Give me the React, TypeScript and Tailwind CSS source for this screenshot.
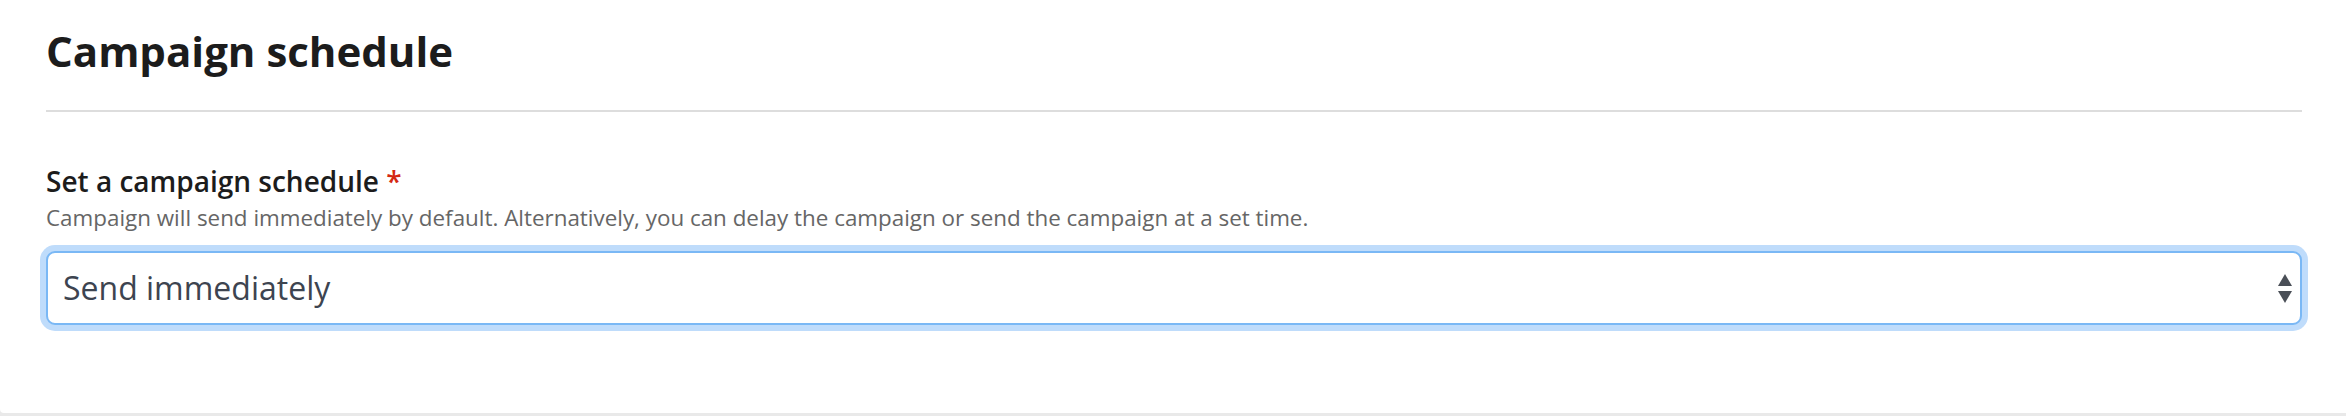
import React from 'react';

const SANS = { fontFamily: '"Open Sans", "Noto Sans", Arial, sans-serif' };

function SortArrows() {
  return (
    <svg width="14" height="29" viewBox="0 0 14 29" className="shrink-0">
      <path d="M7 0 L14 12 L0 12 Z" fill="#4a4f57" />
      <path d="M0 17 L14 17 L7 29 Z" fill="#4a4f57" />
    </svg>
  );
}

export default function App() {
  return (
    <div className="w-[2346px] h-[416px] bg-[#e9e9e9]" style={SANS}>
      <div className="h-[413px] bg-white rounded-bl-[4px] pl-[46px] pr-[44px] pt-[26px]">
        {/* Section header */}
        <div className="border-b-2 border-[#dddddd] pb-[35px]">
          <h2 className="text-[42px] leading-[49px] font-bold text-[#1c1c1c]">
            Campaign schedule
          </h2>
        </div>

        {/* Schedule field */}
        <div className="mt-[51px]">
          <label className="block text-[28px] leading-[37px] font-semibold text-[#1c1c1c]">
            Set a campaign schedule <span className="text-[#d42a12]">*</span>
          </label>
          <p className="mt-[3px] text-[22.4px] leading-[30px] text-[#666666]">
            Campaign will send immediately by default. Alternatively, you can delay the campaign or send the campaign at a set time.
          </p>
          <div className="mt-[18px] h-[74px] flex items-center justify-between rounded-[9px] border-2 border-[#7ab8f5] bg-white pl-[15px] pr-[8px] ring-[6px] ring-[#bfdcfb]">
            <span className="text-[32px] leading-[40px] text-[#3d4450]">Send immediately</span>
            <SortArrows />
          </div>
        </div>
      </div>
    </div>
  );
}
